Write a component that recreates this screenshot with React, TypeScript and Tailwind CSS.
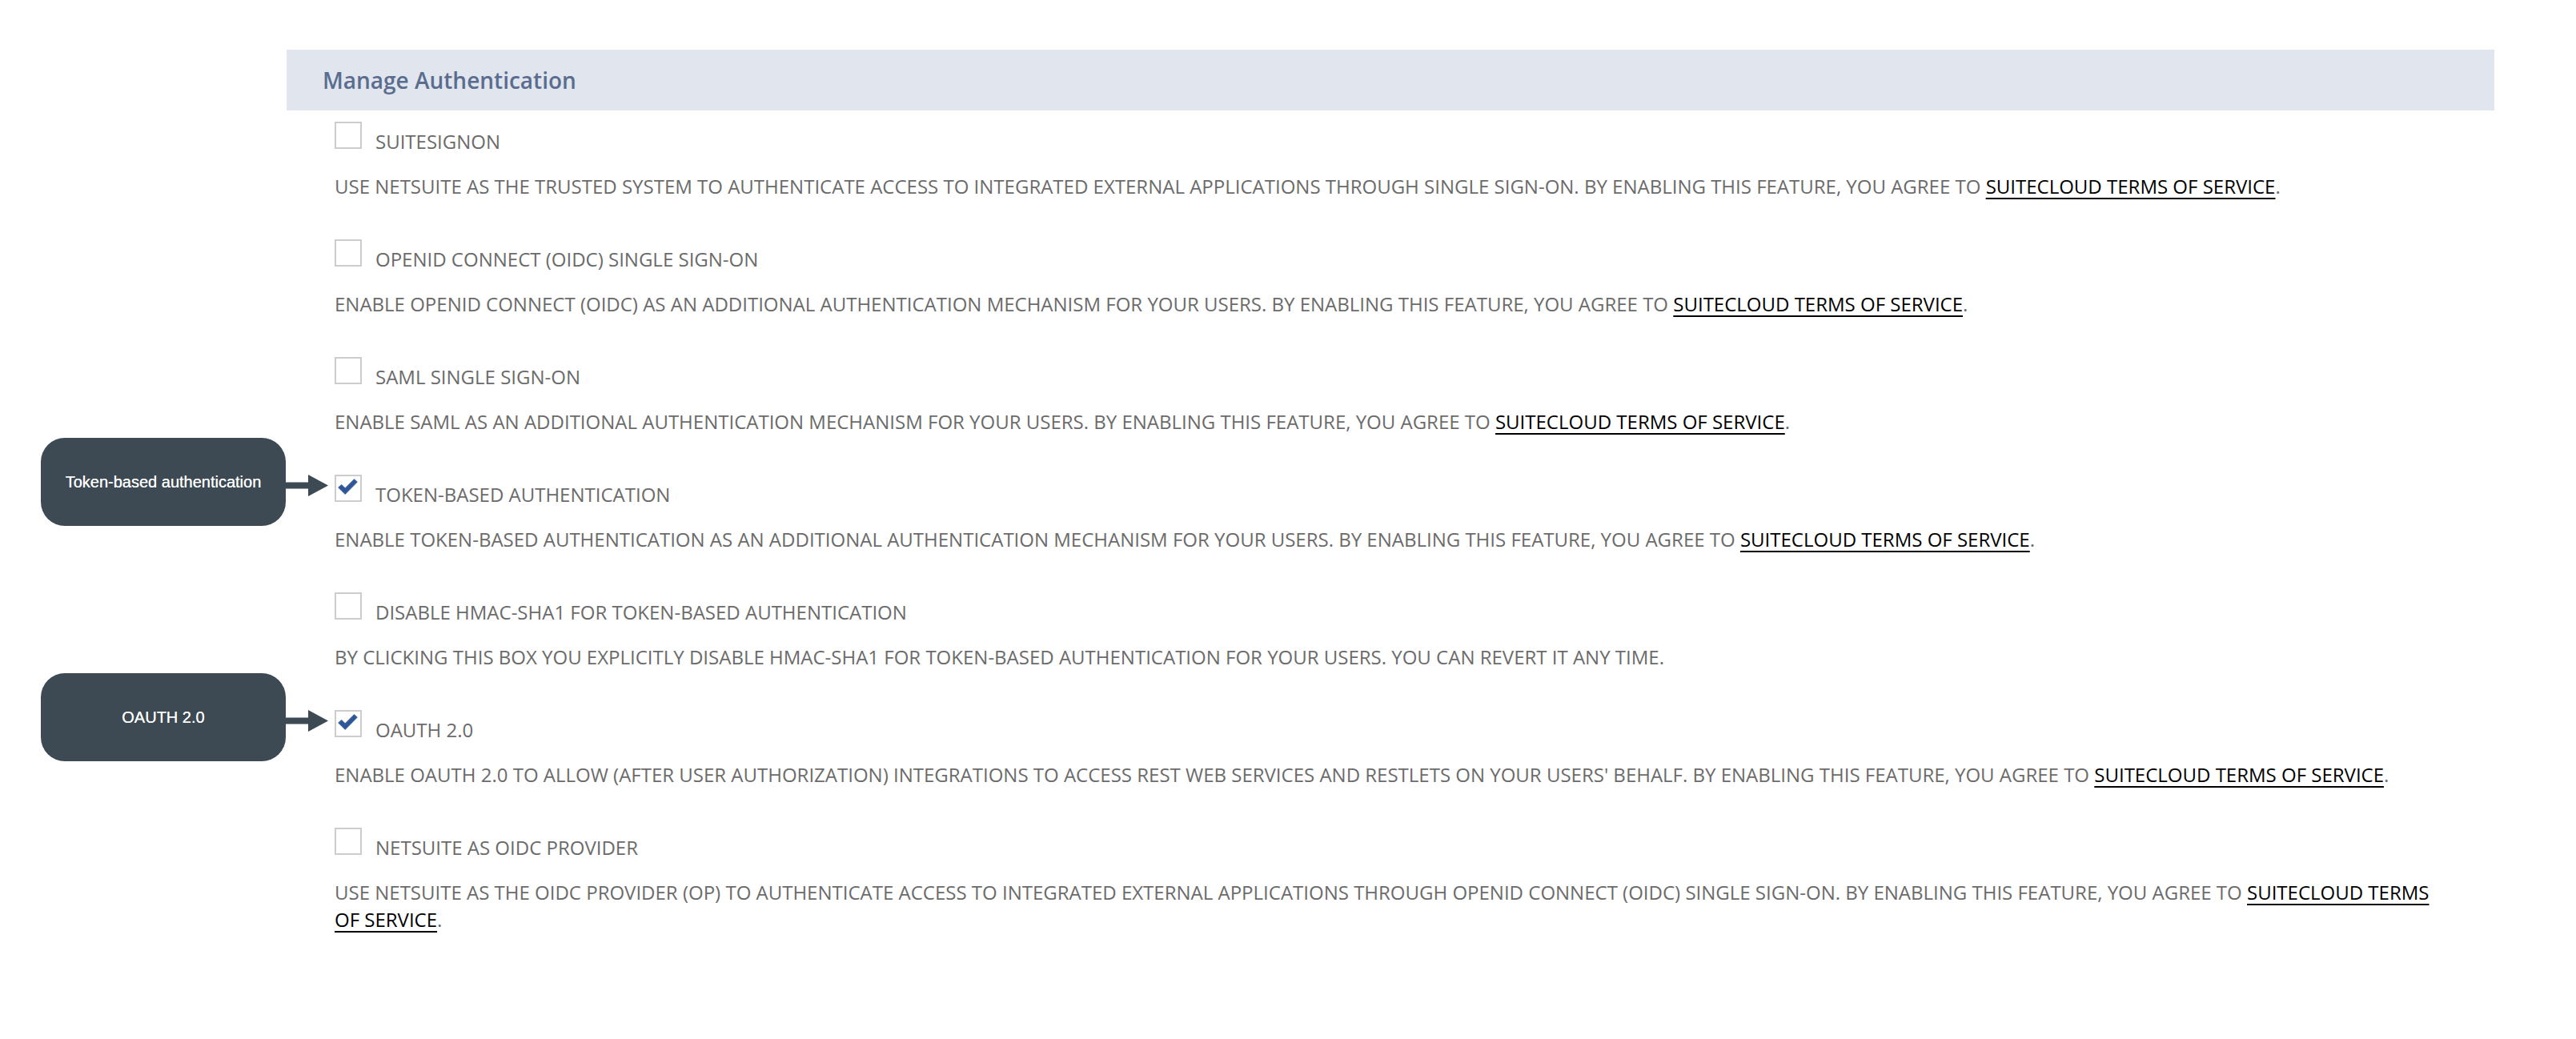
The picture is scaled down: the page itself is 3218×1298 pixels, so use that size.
import React from 'react';

type Feature = {
  label: string;
  text: string;
  terms?: boolean;
  checked?: boolean;
  callout?: string;
};

const features: Feature[] = [
  {
    label: 'SUITESIGNON',
    text: 'USE NETSUITE AS THE TRUSTED SYSTEM TO AUTHENTICATE ACCESS TO INTEGRATED EXTERNAL APPLICATIONS THROUGH SINGLE SIGN-ON. BY ENABLING THIS FEATURE, YOU AGREE TO ',
    terms: true,
  },
  {
    label: 'OPENID CONNECT (OIDC) SINGLE SIGN-ON',
    text: 'ENABLE OPENID CONNECT (OIDC) AS AN ADDITIONAL AUTHENTICATION MECHANISM FOR YOUR USERS. BY ENABLING THIS FEATURE, YOU AGREE TO ',
    terms: true,
  },
  {
    label: 'SAML SINGLE SIGN-ON',
    text: 'ENABLE SAML AS AN ADDITIONAL AUTHENTICATION MECHANISM FOR YOUR USERS. BY ENABLING THIS FEATURE, YOU AGREE TO ',
    terms: true,
  },
  {
    label: 'TOKEN-BASED AUTHENTICATION',
    checked: true,
    callout: 'Token-based authentication',
    text: 'ENABLE TOKEN-BASED AUTHENTICATION AS AN ADDITIONAL AUTHENTICATION MECHANISM FOR YOUR USERS. BY ENABLING THIS FEATURE, YOU AGREE TO ',
    terms: true,
  },
  {
    label: 'DISABLE HMAC-SHA1 FOR TOKEN-BASED AUTHENTICATION',
    text: 'BY CLICKING THIS BOX YOU EXPLICITLY DISABLE HMAC-SHA1 FOR TOKEN-BASED AUTHENTICATION FOR YOUR USERS. YOU CAN REVERT IT ANY TIME.',
  },
  {
    label: 'OAUTH 2.0',
    checked: true,
    callout: 'OAUTH 2.0',
    text: "ENABLE OAUTH 2.0 TO ALLOW (AFTER USER AUTHORIZATION) INTEGRATIONS TO ACCESS REST WEB SERVICES AND RESTLETS ON YOUR USERS' BEHALF. BY ENABLING THIS FEATURE, YOU AGREE TO ",
    terms: true,
  },
  {
    label: 'NETSUITE AS OIDC PROVIDER',
    text: 'USE NETSUITE AS THE OIDC PROVIDER (OP) TO AUTHENTICATE ACCESS TO INTEGRATED EXTERNAL APPLICATIONS THROUGH OPENID CONNECT (OIDC) SINGLE SIGN-ON. BY ENABLING THIS FEATURE, YOU AGREE TO ',
    terms: true,
  },
];

function Checkbox({ checked }: { checked?: boolean }) {
  return (
    <div className="w-[34px] h-[34px] shrink-0 border-2 border-[#cdcdcd] bg-white flex items-center justify-center">
      {checked && (
        <svg width="25" height="21" viewBox="0 0 25 21" className="-mt-[3px] -ml-[2px]">
          <path
            d="M1 11 L4.8 7.8 L9.2 12.2 L20.5 1 L24 4.2 L9.2 19 Z"
            fill="#2f5597"
            stroke="#3a60a3"
            strokeWidth="1.2"
            strokeLinejoin="round"
          />
        </svg>
      )}
    </div>
  );
}

// annotation bubble with arrow pointing at the checkbox
function Callout({ text }: { text: string }) {
  return (
    <div className="absolute right-[calc(100%+8px)] top-[-46px] flex items-center">
      <div className="w-[306px] h-[110px] rounded-[30px] bg-[#3d4a54] flex items-center justify-center text-white text-[20px] font-['Liberation_Sans',Arial,sans-serif] [text-shadow:0_0_0.4px_#fff]">
        {text}
      </div>
      <svg width="53" height="27" viewBox="0 0 53 27" className="mt-[8px] shrink-0">
        <rect x="0" y="9.5" width="30" height="8" fill="#3d4a54" />
        <polygon points="28,0 53,13.5 28,27" fill="#3d4a54" />
      </svg>
    </div>
  );
}

export default function App() {
  return (
    <div className="min-h-[1298px] w-full bg-white pt-[62px] pl-[358px] font-['Open_Sans',sans-serif]">
      <div className="w-[2758px]">
        <div className="h-[76px] bg-[#e0e5ee] flex items-center pl-[45px]">
          <h1 className="text-[28px] font-semibold text-[#5a6d8f]">Manage Authentication</h1>
        </div>

        <div className="pt-[14px] pl-[60px] pr-[56px]">
          {features.map((f) => (
            <div key={f.label} className="mb-[49px]">
              <div className="relative flex items-start">
                {f.callout && <Callout text={f.callout} />}
                <Checkbox checked={f.checked} />
                <span className="ml-[17px] mt-[8px] text-[24px] leading-[34px] text-[#6b6b6b]">{f.label}</span>
              </div>
              <p className="mt-[22px] text-[24px] leading-[34px] text-[#6b6b6b]">
                {f.text}
                {f.terms && (
                  <>
                    <a className="text-black underline decoration-2 underline-offset-[5px]">
                      SUITECLOUD TERMS OF SERVICE
                    </a>
                    .
                  </>
                )}
              </p>
            </div>
          ))}
        </div>
      </div>
    </div>
  );
}
